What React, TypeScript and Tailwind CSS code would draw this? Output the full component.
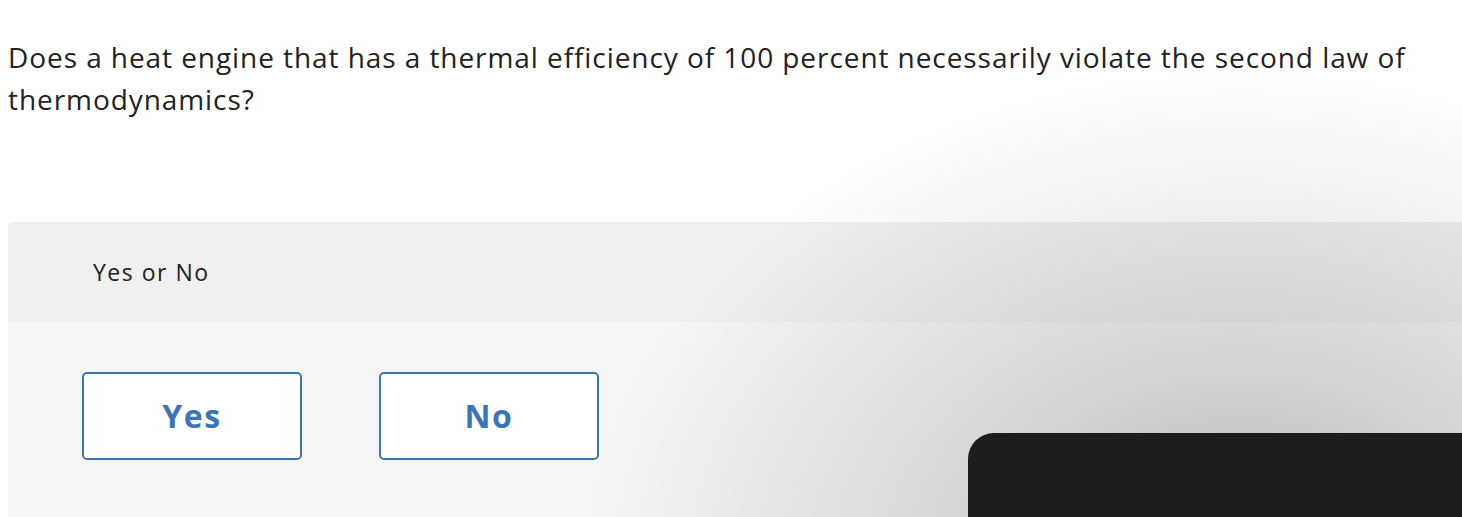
import React from "react"

const font = { fontFamily: "'Open Sans', Lato, sans-serif" }

function ChoiceButton({ label }: { label: string }) {
	return (
		<button
			type="button"
			className="flex h-[88px] w-[220px] items-center justify-center rounded-[5px] border-2 border-[#3a74b9] bg-white text-[32px] font-bold tracking-[1.5px] text-[#3a74b9]">
			{label}
		</button>
	)
}

export default function App() {
	return (
		<div className="relative h-[517px] w-[1462px] overflow-hidden bg-white text-[#222]" style={font}>
			<p className="px-2 pt-[36px] text-[28px] leading-[42px] tracking-[0.93px]">
				Does a heat engine that has a thermal efficiency of 100 percent necessarily violate the second law of
				thermodynamics?
			</p>

			<div className="mt-[102px] ml-2 overflow-hidden rounded-tl-[5px]">
				<div className="flex h-[100px] items-center bg-[#f0f0f0] pl-[85px] text-[23px] tracking-[1.5px]">Yes or No</div>
				<div className="flex h-[195px] gap-[77px] bg-[#f5f5f5] pt-[50px] pl-[74px]">
					<ChoiceButton label="Yes" />
					<ChoiceButton label="No" />
				</div>
			</div>

			{/* soft shadow cast by the overlay panel */}
			<div className="pointer-events-none absolute inset-0 bg-[radial-gradient(ellipse_660px_500px_at_1240px_570px,rgba(0,0,0,0.28),rgba(0,0,0,0.12)_45%,rgba(0,0,0,0)_100%)]" />

			{/* dark overlay panel in the corner */}
			<div className="absolute top-[433px] left-[968px] h-[300px] w-[700px] rounded-tl-[26px] bg-[#1d1d1f]" />
		</div>
	)
}
